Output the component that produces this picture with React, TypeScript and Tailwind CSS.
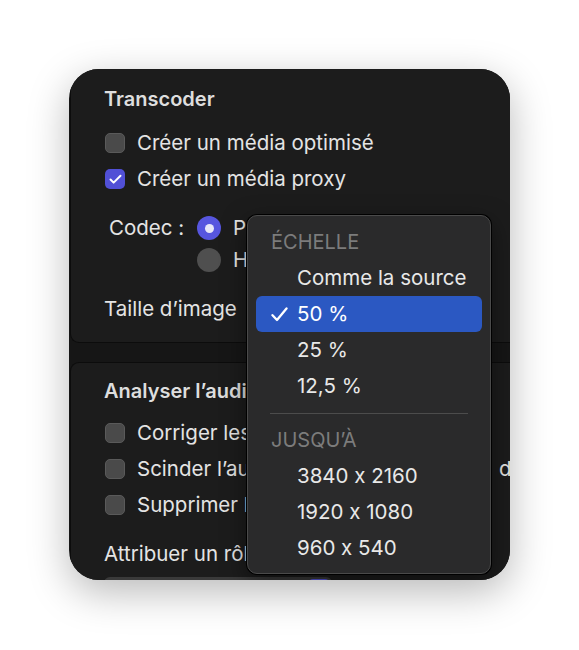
import type { ReactNode } from "react"
import { Check } from "lucide-react"

const font = { fontFamily: "Inter, 'Noto Sans', sans-serif", fontFeatureSettings: "'calt' 0" }

function Checkbox({ checked, label }: { checked?: boolean; label: ReactNode }) {
  return (
    <div className="flex h-[36px] items-center gap-[12px] whitespace-nowrap">
      {checked ? (
        <div className="ml-[1px] flex h-[20px] w-[20px] shrink-0 items-center justify-center rounded-[5px] bg-[#5150d6]">
          <Check size={15} strokeWidth={3.2} className="text-white" />
        </div>
      ) : (
        <div className="ml-[1px] h-[20px] w-[20px] shrink-0 rounded-[5px] border border-[#5a5a5a] bg-[#4a4a4a]" />
      )}
      <span className="text-[20.5px] text-[#e4e4e4]">{label}</span>
    </div>
  )
}

function Radio({ checked, label }: { checked?: boolean; label: string }) {
  return (
    <div className="flex h-[32px] items-center gap-[12px] whitespace-nowrap">
      {checked ? (
        <div className="flex h-[24px] w-[24px] items-center justify-center rounded-full bg-[#5756df]">
          <div className="h-[9px] w-[9px] rounded-full bg-[#e8e8f8]" />
        </div>
      ) : (
        <div className="h-[24px] w-[24px] rounded-full bg-[#4f4f4f]" />
      )}
      <span className="text-[20.5px] text-[#e4e4e4]">{label}</span>
    </div>
  )
}

function MenuItem({ label, selected }: { label: string; selected?: boolean }) {
  return (
    <div
      className={
        selected
          ? "mx-[8px] flex h-[36px] items-center rounded-[6px] bg-[#2b58c2] pl-[15px] text-white"
          : "mx-[8px] flex h-[36px] items-center pl-[15px] text-[#e8e8e8]"
      }
    >
      <span className="flex w-[26px] items-center">
        {selected && (
          <svg width="17" height="15" viewBox="0 0 17 15" fill="none">
            <path d="M1.5 8.2 L6 13 L15.5 1.5" stroke="white" strokeWidth="2.3" strokeLinecap="round" strokeLinejoin="round" />
          </svg>
        )}
      </span>
      <span className="text-[20.5px]">{label}</span>
    </div>
  )
}

function MenuHeader({ label }: { label: string }) {
  return (
    <div className="flex h-[36px] items-center pl-[23px] text-[20px] text-[#7c7c7c]">{label}</div>
  )
}

export default function App() {
  return (
    <div className="flex h-[650px] w-[579px] bg-white pl-[69px] pt-[69px]" style={font}>
      <div className="relative h-[511px] w-[441px] overflow-hidden rounded-[30px] bg-[#161616] shadow-[0_12px_40px_rgba(0,0,0,0.28)]">
        <div className="flex flex-col">
          {/* transcoder */}
          <div className="ml-[1px] w-[480px] rounded-bl-[9px] border-b border-l border-[#0c0c0c] bg-[#1c1c1c] pb-[15px] pl-[33px] pt-[18px]">
            <div className="flex h-[24px] items-center text-[20px] font-semibold text-[#dedede]">Transcoder</div>
            <div className="mt-[14px]">
              <Checkbox label="Créer un média optimisé" />
              <Checkbox checked label="Créer un média proxy" />
            </div>
            <div className="mt-[15px] flex">
              <div className="flex h-[32px] w-[93px] items-center pl-[5px] text-[20.5px] text-[#e4e4e4]">Codec :</div>
              <div className="flex flex-col">
                <Radio checked label="ProRes 422 Proxy" />
                <Radio label="H.264" />
              </div>
            </div>
            <div className="mt-[15px] flex h-[36px] items-center text-[20.5px] text-[#e4e4e4]">Taille d’image</div>
          </div>

          {/* audio */}
          <div className="ml-[1px] mt-[19px] w-[480px] rounded-tl-[9px] border-l border-t border-[#0c0c0c] bg-[#1c1c1c] pl-[33px] pt-[16px]">
            <div className="flex h-[24px] items-center whitespace-nowrap text-[20px] font-semibold text-[#dedede]">
              Analyser l’audio et corriger
            </div>
            <div className="mt-[12px]">
              <Checkbox label="Corriger les problèmes audio" />
              <Checkbox
                label={
                  <>
                    Scinder l’audio en mono double et le<span className="ml-[10px]">diviser</span>
                  </>
                }
              />
              <Checkbox label="Supprimer les canaux silencieux" />
            </div>
            <div className="mt-[19px] flex h-[24px] items-center whitespace-nowrap text-[20.5px] text-[#e4e4e4]">
              Attribuer un rôle audio
            </div>
            <div className="mt-[11px] flex h-[24px] w-[228px] items-center justify-end rounded-[6px] bg-[#3a3a3a] pr-[2px]">
              <div className="h-[20px] w-[22px] rounded-[5px] bg-[#5756df]" />
            </div>
          </div>
        </div>

        {/* popup menu */}
        <div className="absolute left-[178px] top-[146px] w-[244px] rounded-[10px] border border-[#4a4a4a] bg-[#2a2a2b] pb-[7px] pt-[8px] shadow-[0_0_0_1px_#000,0_8px_24px_rgba(0,0,0,0.5)]">
          <MenuHeader label="ÉCHELLE" />
          <MenuItem label="Comme la source" />
          <MenuItem selected label="50 %" />
          <MenuItem label="25 %" />
          <MenuItem label="12,5 %" />
          <div className="flex h-[18px] items-center px-[22px]">
            <div className="h-[1px] w-full bg-[#4c4c4c]" />
          </div>
          <MenuHeader label="JUSQU’À" />
          <MenuItem label="3840 x 2160" />
          <MenuItem label="1920 x 1080" />
          <MenuItem label="960 x 540" />
        </div>
      </div>
    </div>
  )
}
